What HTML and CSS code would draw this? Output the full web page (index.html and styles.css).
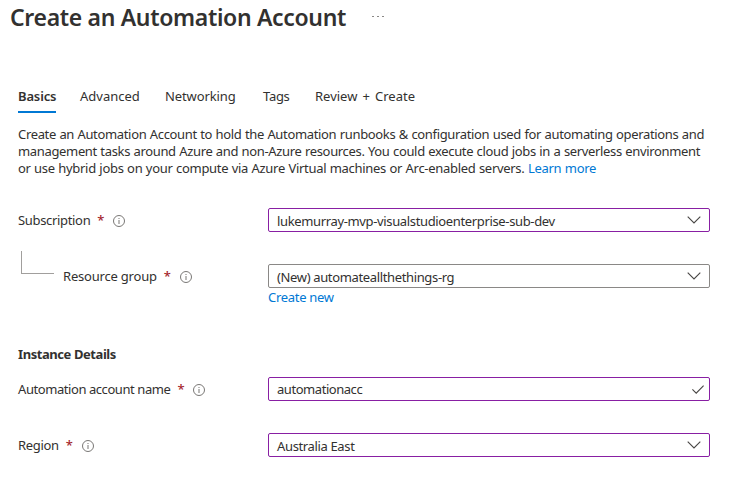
FILE: index.html
```html
<!DOCTYPE html>
<html lang="en">
<head>
<meta charset="utf-8">
<title>Create an Automation Account</title>
<link rel="stylesheet" href="styles.css">
</head>
<body>
<svg class="sprite" aria-hidden="true">
  <symbol id="info" viewBox="0 0 12 12"><circle cx="6" cy="6" r="5.5" fill="none" stroke="currentColor"/><path d="M5.5 5h1v4h-1zM5.5 3h1v1h-1z" fill="currentColor"/></symbol>
  <symbol id="chevron" viewBox="0 0 14 8"><path d="M.7.7 7 7 13.3.7" fill="none" stroke="currentColor" stroke-width="1.1"/></symbol>
  <symbol id="check" viewBox="0 0 12 9"><path d="M.4 4.4 4.2 8.1 11.6.6" fill="none" stroke="currentColor" stroke-width="1.1"/></symbol>
</svg>
<header class="header">
  <h1 class="title">Create an Automation Account</h1>
  <span class="more"><i></i><i></i><i></i></span>
</header>
<nav class="tabs">
  <a class="tab active">Basics</a>
  <a class="tab advanced">Advanced</a>
  <a class="tab networking">Networking</a>
  <a class="tab tags">Tags</a>
  <a class="tab review">Review + Create</a>
</nav>
<main class="content">
  <p class="intro">
    <span class="line first">Create an Automation Account to hold the Automation runbooks &amp; configuration used for automating operations and</span>
    <span class="line second">management tasks around Azure and non-Azure resources. You could execute cloud jobs in a serverless environment</span>
    <span class="line third">or use hybrid jobs on your compute via Azure Virtual machines or Arc-enabled servers. <a class="link">Learn more</a></span>
  </p>
  <div class="row subscription">
    <label class="label"><span class="name">Subscription</span><b class="required">*</b><svg class="info"><use href="#info"/></svg></label>
    <div class="field edited"><span class="value">lukemurray-mvp-visualstudioenterprise-sub-dev</span><svg class="chevron"><use href="#chevron"/></svg></div>
  </div>
  <div class="row group">
    <label class="label"><span class="branch"></span><span class="name">Resource group</span><b class="required">*</b><svg class="info"><use href="#info"/></svg></label>
    <div class="field"><span class="value">(New) automateallthethings-rg</span><svg class="chevron"><use href="#chevron"/></svg></div>
  </div>
  <a class="link create">Create new</a>
  <h2 class="section">Instance Details</h2>
  <div class="row account">
    <label class="label"><span class="name">Automation account name</span><b class="required">*</b><svg class="info"><use href="#info"/></svg></label>
    <div class="field edited input"><span class="value">automationacc</span><svg class="check"><use href="#check"/></svg></div>
  </div>
  <div class="row region">
    <label class="label"><span class="name">Region</span><b class="required">*</b><svg class="info"><use href="#info"/></svg></label>
    <div class="field edited"><span class="value">Australia East</span><svg class="chevron"><use href="#chevron"/></svg></div>
  </div>
</main>
</body>
</html>
```
FILE: styles.css
```css
* { box-sizing: border-box; }
body { margin: 0; background: #fff; color: #323130; font: 13px/17px "Noto Sans", "Open Sans", sans-serif; white-space: nowrap; }
.sprite { display: none; }
.header { display: flex; height: 88px; padding: 1px 0 0 10px; }
.title { margin: 0; width: 362px; font-size: 23px; line-height: 32px; font-weight: 600; letter-spacing: -.33px; }
.more { display: flex; gap: 3px; padding-top: 15px; }
.more i { width: 2px; height: 1px; background: #8a8886; }
.tabs { display: flex; height: 25px; padding-left: 18px; }
.tab { height: 25px; }
.tab.active { width: 38px; margin-right: 24px; font-weight: 600; letter-spacing: -.15px; border-bottom: 2px solid #0078d4; }
.advanced { width: 85px; }
.networking { width: 98px; letter-spacing: -.1px; }
.tags { width: 52px; letter-spacing: -.3px; }
.review { word-spacing: 1.7px; }
.content { padding: 13px 39px 0 18px; }
.intro { margin: 0 0 31px; }
.line { display: block; height: 17px; letter-spacing: -.34px; word-spacing: .4px; }
.third { letter-spacing: -.3px; }
.link { color: #0078d4; }
.row { display: flex; height: 24px; }
.label { display: flex; align-items: center; width: 250px; color: #323130; }
.name { letter-spacing: -.33px; }
.group .name { letter-spacing: -.2px; }
.account .name { letter-spacing: -.43px; }
.required { margin: 0 10px 0 7px; width: 6px; color: #a4262c; font-weight: 500; font-size: 13px; }
.info { width: 12px; height: 12px; margin-top: 2px; color: #797775; }
.field { display: flex; align-items: center; justify-content: space-between; width: 442px; height: 24px; padding: 2px 8px 0 8px; border: 1px solid #8a8886; border-radius: 2px; }
.field.edited { border-color: #881fa3; }
.value { letter-spacing: -.355px; }
.account .value { letter-spacing: -.45px; }
.chevron { width: 14px; height: 8px; margin-top: -2px; color: #484644; }
.check { width: 12px; height: 9px; color: #484644; }
.input { padding: 0 5px 0 8px; }
.group { margin-top: 32px; }
.branch { width: 33px; height: 23px; margin: -28px 9px 0 3px; border-left: 1px solid #a19f9d; border-bottom: 1px solid #a19f9d; }
.create { display: block; margin: 1px 0 0 250px; letter-spacing: -.3px; }
.section { margin: 40px 0 14px; font-size: 13px; line-height: 17px; font-weight: 700; letter-spacing: -.43px; }
.region { margin-top: 32px; }
```
